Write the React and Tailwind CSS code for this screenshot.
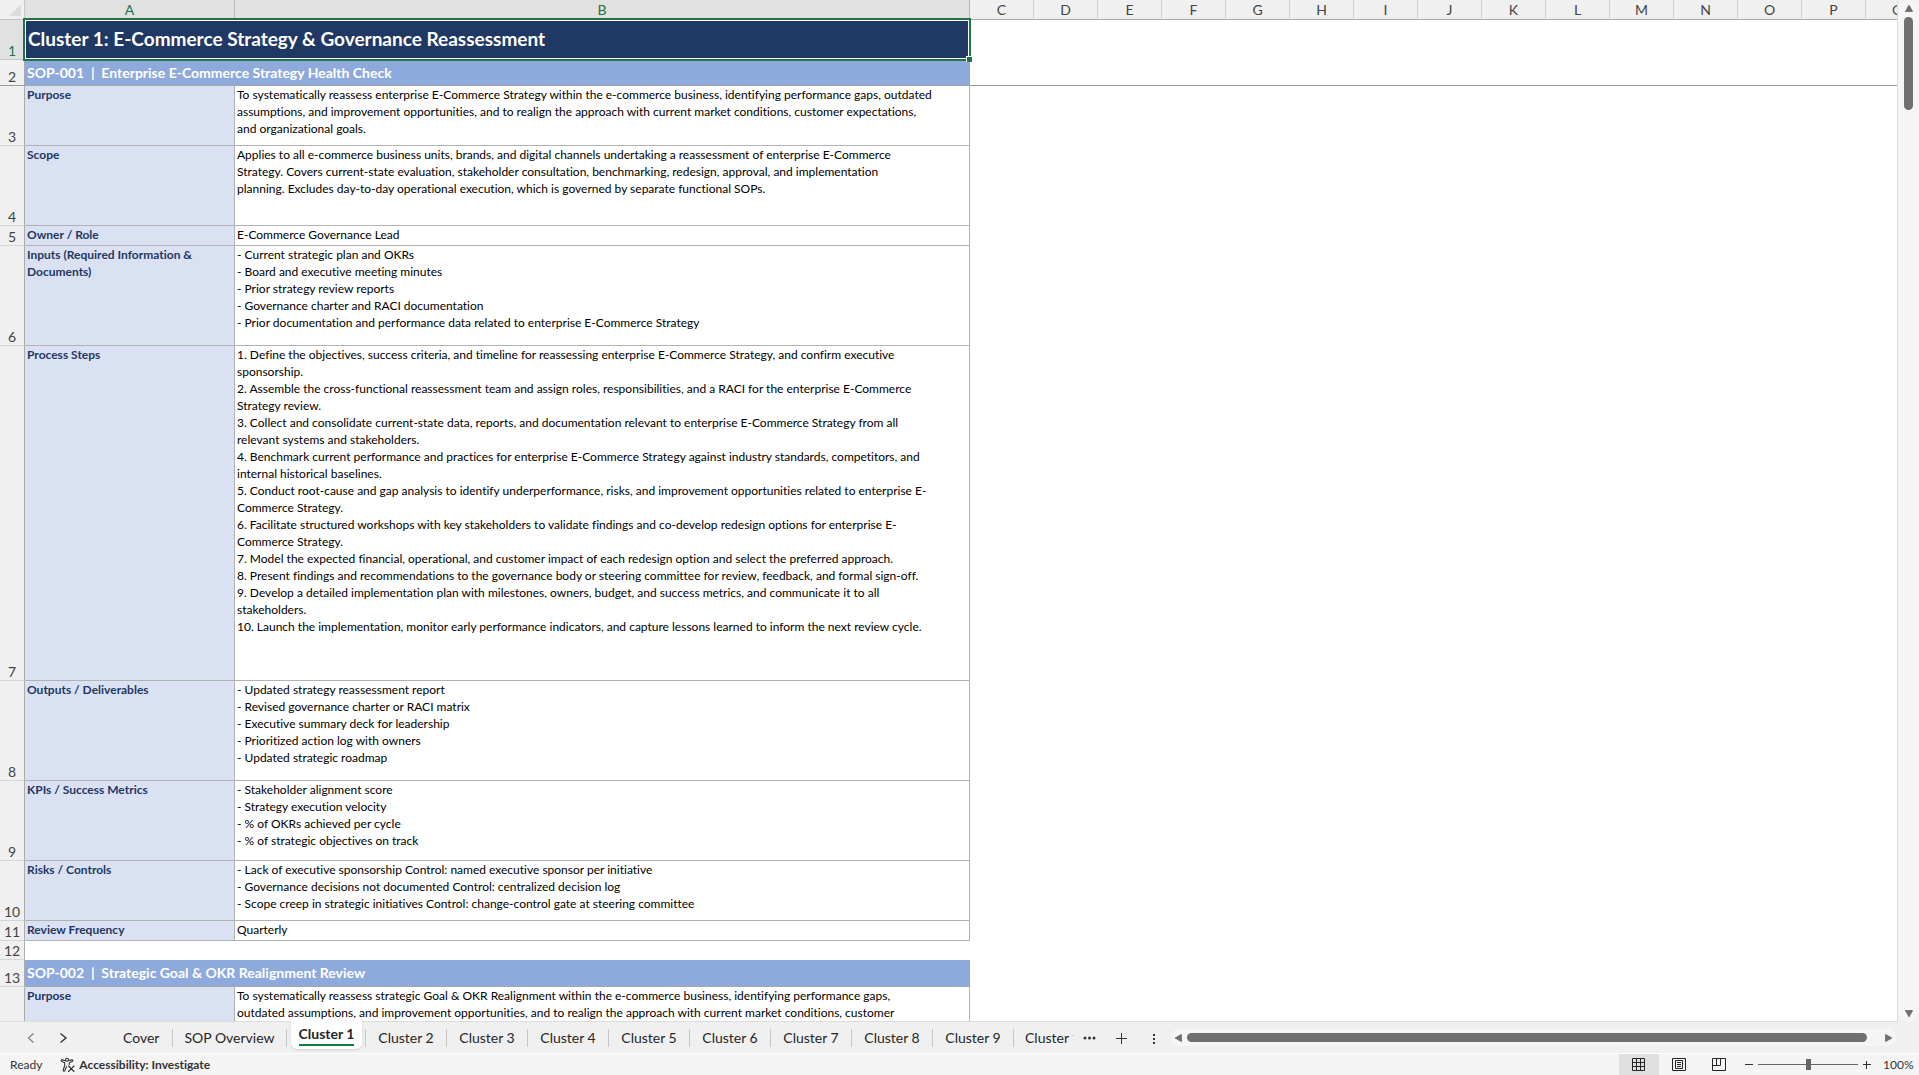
import React, { useState } from "react";
import clsx from "clsx";

const COLUMNS = "ABCDEFGHIJKLMNOPQ".split("");

const ROWS = [
  { type: "title", height: "h-[40px]", text: "Cluster 1: E-Commerce Strategy & Governance Reassessment" },
  { type: "band", height: "h-[26px]", code: "SOP-001", text: "Enterprise E-Commerce Strategy Health Check", frozen: true },
  {
    height: "h-[60px]",
    label: ["Purpose"],
    lines: [
      "To systematically reassess enterprise E-Commerce Strategy within the e-commerce business, identifying performance gaps, outdated",
      "assumptions, and improvement opportunities, and to realign the approach with current market conditions, customer expectations,",
      "and organizational goals.",
    ],
  },
  {
    height: "h-[80px]",
    label: ["Scope"],
    lines: [
      "Applies to all e-commerce business units, brands, and digital channels undertaking a reassessment of enterprise E-Commerce",
      "Strategy. Covers current-state evaluation, stakeholder consultation, benchmarking, redesign, approval, and implementation",
      "planning. Excludes day-to-day operational execution, which is governed by separate functional SOPs.",
    ],
  },
  { height: "h-[20px]", label: ["Owner / Role"], lines: ["E-Commerce Governance Lead"] },
  {
    height: "h-[100px]",
    label: ["Inputs (Required Information &", "Documents)"],
    lines: [
      "- Current strategic plan and OKRs",
      "- Board and executive meeting minutes",
      "- Prior strategy review reports",
      "- Governance charter and RACI documentation",
      "- Prior documentation and performance data related to enterprise E-Commerce Strategy",
    ],
  },
  {
    height: "h-[335px]",
    label: ["Process Steps"],
    lines: [
      "1. Define the objectives, success criteria, and timeline for reassessing enterprise E-Commerce Strategy, and confirm executive",
      "sponsorship.",
      "2. Assemble the cross-functional reassessment team and assign roles, responsibilities, and a RACI for the enterprise E-Commerce",
      "Strategy review.",
      "3. Collect and consolidate current-state data, reports, and documentation relevant to enterprise E-Commerce Strategy from all",
      "relevant systems and stakeholders.",
      "4. Benchmark current performance and practices for enterprise E-Commerce Strategy against industry standards, competitors, and",
      "internal historical baselines.",
      "5. Conduct root-cause and gap analysis to identify underperformance, risks, and improvement opportunities related to enterprise E-",
      "Commerce Strategy.",
      "6. Facilitate structured workshops with key stakeholders to validate findings and co-develop redesign options for enterprise E-",
      "Commerce Strategy.",
      "7. Model the expected financial, operational, and customer impact of each redesign option and select the preferred approach.",
      "8. Present findings and recommendations to the governance body or steering committee for review, feedback, and formal sign-off.",
      "9. Develop a detailed implementation plan with milestones, owners, budget, and success metrics, and communicate it to all",
      "stakeholders.",
      "10. Launch the implementation, monitor early performance indicators, and capture lessons learned to inform the next review cycle.",
    ],
  },
  {
    height: "h-[100px]",
    label: ["Outputs / Deliverables"],
    lines: [
      "- Updated strategy reassessment report",
      "- Revised governance charter or RACI matrix",
      "- Executive summary deck for leadership",
      "- Prioritized action log with owners",
      "- Updated strategic roadmap",
    ],
  },
  {
    height: "h-[80px]",
    label: ["KPIs / Success Metrics"],
    lines: [
      "- Stakeholder alignment score",
      "- Strategy execution velocity",
      "- % of OKRs achieved per cycle",
      "- % of strategic objectives on track",
    ],
  },
  {
    height: "h-[60px]",
    label: ["Risks / Controls"],
    lines: [
      "- Lack of executive sponsorship Control: named executive sponsor per initiative",
      "- Governance decisions not documented Control: centralized decision log",
      "- Scope creep in strategic initiatives Control: change-control gate at steering committee",
    ],
  },
  { height: "h-[20px]", label: ["Review Frequency"], lines: ["Quarterly"] },
  { type: "empty", height: "h-[19px]" },
  { type: "band", height: "h-[27px]", code: "SOP-002", text: "Strategic Goal & OKR Realignment Review" },
  {
    height: "h-[60px]",
    label: ["Purpose"],
    lines: [
      "To systematically reassess strategic Goal & OKR Realignment within the e-commerce business, identifying performance gaps,",
      "outdated assumptions, and improvement opportunities, and to realign the approach with current market conditions, customer",
    ],
  },
];

const TABS = [
  "Cover",
  "SOP Overview",
  "Cluster 1",
  "Cluster 2",
  "Cluster 3",
  "Cluster 4",
  "Cluster 5",
  "Cluster 6",
  "Cluster 7",
  "Cluster 8",
  "Cluster 9",
];

const Lines = ({ lines }) =>
  lines.map((line, i) => (
    <div key={i} className="whitespace-nowrap">
      {line}
    </div>
  ));

const SheetRow = ({ row, number }) => {
  const selected = row.type === "title";

  return (
    <tr className={row.height}>
      <th
        scope="row"
        className={clsx(
          "border-r border-b p-0 text-center align-bottom text-sm leading-4 font-normal",
          selected
            ? "border-r-[#ababab] border-b-[#c6c6c6] bg-[#e1e1e1] text-[#217346]"
            : "border-r-[#ababab] bg-[#f0f0f0] text-[#444]",
          !selected && (row.frozen ? "border-b-[#9b9b9b]" : "border-b-[#d6d6d6]")
        )}
      >
        {number < 14 && number}
      </th>

      {row.type === "title" && (
        <td colSpan={2} className="relative bg-[#203864] px-[3px] pt-0 pb-0.5 align-middle text-[19px] leading-6 font-bold text-white">
          {row.text}
          {/* selection outline and fill handle */}
          <div className="pointer-events-none absolute -top-0.5 -right-px -bottom-px -left-0.5 border-2 border-[#217346]">
            <div className="h-full border border-white" />
          </div>
          <div className="absolute -right-0.5 -bottom-0.5 size-1.5 border-t border-l border-white bg-[#217346]" />
        </td>
      )}

      {row.type === "band" && (
        <td
          colSpan={2}
          className="border-b border-[#a6a6a6] bg-[#8ea9db] px-0.5 py-0 align-middle text-sm leading-5 font-bold whitespace-pre text-white"
        >
          {row.code + "  |  " + row.text}
        </td>
      )}

      {row.type === "empty" && <td colSpan={2} />}

      {!row.type && (
        <>
          <td className="border-r border-b border-[#b2b2b2] bg-[#d9e1f2] px-0.5 py-0 align-top font-bold text-[#1f3864]">
            <Lines lines={row.label} />
          </td>
          <td className="border-r border-b border-[#b2b2b2] px-0.5 py-0 align-top">
            <Lines lines={row.lines} />
          </td>
        </>
      )}

      <td colSpan={COLUMNS.length - 2} className={clsx(row.frozen && "border-b border-[#9b9b9b]")} />
    </tr>
  );
};

const Sheet = () => (
  <div className="min-w-0 flex-1 overflow-hidden border-r border-b border-[#dcdcdc] bg-white">
    <table className="w-full table-fixed border-separate border-spacing-0 text-left text-[12px] leading-[17px] text-black">
      <colgroup>
        <col className="w-[25px]" />
        <col className="w-[210px]" />
        <col className="w-[735px]" />
        {COLUMNS.slice(2).map((c) => (
          <col key={c} className="w-16" />
        ))}
      </colgroup>
      <thead>
        <tr className="h-5">
          <td className="border-r border-b border-r-[#c6c6c6] border-b-[#c6c6c6] bg-[#f0f0f0] p-0">
            <svg viewBox="0 0 24 19" className="block h-[19px] w-6">
              <path d="M21 4v12H9z" fill="#dcdcdc" />
            </svg>
          </td>
          {COLUMNS.map((c, i) => (
            <th
              key={c}
              scope="col"
              className={clsx(
                "border-r border-b border-b-[#ababab] p-0 text-center text-sm leading-[19px] font-normal",
                i < 2 ? "border-r-[#b8b8b8] bg-[#e1e1e1] text-[#217346]" : "border-r-[#d0d0d0] bg-[#f0f0f0] text-[#444]"
              )}
            >
              {c}
            </th>
          ))}
        </tr>
      </thead>
      <tbody>
        {ROWS.map((row, i) => (
          <SheetRow key={i} row={row} number={i + 1} />
        ))}
      </tbody>
    </table>
  </div>
);

const VerticalScrollbar = () => (
  <div className="flex w-[21px] flex-col items-center rounded-full bg-[#f5f5f5] pt-1 pb-1">
    <button aria-label="Scroll up">
      <svg viewBox="0 0 10 9" className="block h-[9px] w-2.5">
        <path d="M5 1.2 8.5 7.4h-7z" fill="#707070" stroke="#707070" strokeLinejoin="round" />
      </svg>
    </button>
    <div className="mt-1 h-[93px] w-[9px] rounded-full bg-[#707070]" />
    <button aria-label="Scroll down" className="mt-auto">
      <svg viewBox="0 0 10 9" className="block h-[9px] w-2.5">
        <path d="M5 7.8 8.5 1.6h-7z" fill="#707070" stroke="#707070" strokeLinejoin="round" />
      </svg>
    </button>
  </div>
);

const HorizontalScrollbar = () => (
  <div className="mr-[22px] flex h-[17px] flex-1 items-center rounded-full bg-[#f5f5f5] px-1">
    <button aria-label="Scroll left">
      <svg viewBox="0 0 9 10" className="block h-2.5 w-[9px]">
        <path d="M1.2 5 7.4 8.5v-7z" fill="#707070" stroke="#707070" strokeLinejoin="round" />
      </svg>
    </button>
    <div className="mr-[17px] ml-1 h-[9px] flex-1 rounded-full bg-[#707070]" />
    <button aria-label="Scroll right">
      <svg viewBox="0 0 9 10" className="block h-2.5 w-[9px]">
        <path d="M7.8 5 1.6 8.5v-7z" fill="#707070" stroke="#707070" strokeLinejoin="round" />
      </svg>
    </button>
  </div>
);

const TabBar = () => {
  const [active, setActive] = useState("Cluster 1");

  return (
    <div className="flex h-8 items-center border-b border-white bg-[#f0f0f0] text-sm text-[#262626]">
      <button aria-label="Previous sheet" className="ml-6">
        <svg viewBox="0 0 14 14" className="size-3.5" fill="none" stroke="#8a8a8a" strokeWidth="1.4">
          <path d="M9.5 2.5 4.5 7l5 4.5" />
        </svg>
      </button>
      <button aria-label="Next sheet" className="mr-[53px] ml-[18px]">
        <svg viewBox="0 0 14 14" className="size-3.5" fill="none" stroke="#333" strokeWidth="1.4">
          <path d="M4.5 2.5 10 7l-5.500 4.500" />
        </svg>
      </button>

      {TABS.map((tab, i) =>
        tab === active ? (
          <div key={tab} className="flex h-full w-[79px] items-center">
            <button className="-mt-[5px] ml-1 flex h-7 w-[71px] justify-center rounded-b-md bg-white shadow-sm">
              <span className="mt-1 h-[21px] border-b-2 border-[#107c41] leading-[18px] font-bold">{tab}</span>
            </button>
            <span className="ml-auto h-[18px] border-r border-[#c6c6c6]" />
          </div>
        ) : (
          <button
            key={tab}
            onClick={() => setActive(tab)}
            className={clsx(
              "h-[18px] border-r border-[#c6c6c6] leading-4 whitespace-nowrap",
              i === 0 && "w-[50px] text-left",
              i === 1 && "w-[114px]",
              i > 1 && "w-[81px]"
            )}
          >
            {tab}
          </button>
        )
      )}
      <button className="ml-[11px] h-[18px] w-[49px] overflow-hidden text-left leading-4 whitespace-nowrap">Cluster 10</button>

      <button aria-label="More sheets" className="ml-2">
        <svg viewBox="0 0 14 14" className="size-3.5" fill="#333">
          <circle cx="3" cy="7" r="1.500" />
          <circle cx="7.500" cy="7" r="1.500" />
          <circle cx="12" cy="7" r="1.500" />
        </svg>
      </button>
      <button aria-label="New sheet" className="ml-[18px]">
        <svg viewBox="0 0 14 14" className="size-3.5" stroke="#333" strokeWidth="1">
          <path d="M7.500 2v11M2 7.500h11" />
        </svg>
      </button>
      <button aria-label="Resize tab bar" className="ml-6">
        <svg viewBox="0 0 4 14" className="h-3.5 w-1" fill="#333">
          <path d="M1 3h2v2H1zM1 7h2v2H1zM1 11h2v2H1z" />
        </svg>
      </button>
      <div className="ml-3.5 flex flex-1">
        <HorizontalScrollbar />
      </div>
    </div>
  );
};

const StatusBar = () => {
  const [zoom, setZoom] = useState(100);

  return (
    <div className="flex h-[21px] items-center bg-[#f4f4f4] text-[12px] text-[#333]">
      <span className="ml-2.5">Ready</span>
      <button className="ml-[18px] flex items-center gap-[3px] font-bold">
        <svg viewBox="0 0 16 16" className="size-4" fill="none" stroke="#333" strokeWidth="1.1" strokeLinecap="round" strokeLinejoin="round">
          <circle cx="7" cy="2.700" r="1.500" />
          <path d="M5.400 3.800 2.300 2.900c-1.200-.3-1.600 1.300-.5 1.700l2.900 1.100v2.800l-1.500 4.500c-.3 1.200 1.200 1.600 1.600.6l1.700-3.900" />
          <path d="m8.600 3.800 3.100-.9c1.200-.3 1.600 1.300.5 1.700L9.300 5.700v1.800" />
          <path d="m8.500 9 5.500 5.500M14 9l-5.500 5.500" />
        </svg>
        Accessibility: Investigate
      </button>

      <div className="ml-auto flex h-full items-center">
        <button aria-label="Normal view" className="flex h-full w-10 items-center justify-center bg-[#e0e0e0]">
          <svg viewBox="0 0 14 14" className="size-3.5" fill="none" stroke="#262626">
            <path d="M.5.5h12v12H.5zM4.500.5v12M8.500.5v12M.5 4.500h12M.5 8.500h12" />
          </svg>
        </button>
        <button aria-label="Page layout" className="flex h-full w-10 items-center justify-center">
          <svg viewBox="0 0 14 14" className="size-3.5" fill="none" stroke="#262626">
            <path d="M.5.5h13v12H.5zM3.500 2.500h7v8h-7zM5 4.500h4M5 6.500h4M5 8.500h4" />
          </svg>
        </button>
        <button aria-label="Page break preview" className="flex h-full w-10 items-center justify-center">
          <svg viewBox="0 0 14 14" className="size-3.5" fill="none" stroke="#262626">
            <path d="M.5.5h13v12H.5zM.5 7.500h8v-7M4.500.5v7" />
          </svg>
        </button>
        <button aria-label="Zoom out" className="ml-1.5">
          <svg viewBox="0 0 8 8" className="size-2" stroke="#333">
            <path d="M0 3.500h8" />
          </svg>
        </button>
        <input
          type="range"
          aria-label="Zoom"
          min="0"
          max="200"
          value={zoom}
          onChange={(e) => setZoom(Number(e.target.value))}
          className="mx-[5px] h-3 w-[100px] appearance-none bg-transparent [&::-webkit-slider-runnable-track]:h-px [&::-webkit-slider-runnable-track]:bg-[#666] [&::-webkit-slider-thumb]:-mt-[5px] [&::-webkit-slider-thumb]:h-[11px] [&::-webkit-slider-thumb]:w-[5px] [&::-webkit-slider-thumb]:appearance-none [&::-webkit-slider-thumb]:bg-[#666]"
        />
        <button aria-label="Zoom in">
          <svg viewBox="0 0 8 8" className="size-2" stroke="#333">
            <path d="M0 3.500h8M3.500 0v8" />
          </svg>
        </button>
        <button className="mr-2 ml-3 w-7 text-right whitespace-nowrap">{zoom}%</button>
      </div>
    </div>
  );
};

export default function App() {
  return (
    <div className="flex h-screen flex-col overflow-hidden bg-[#f0f0f0] font-[Lato,sans-serif] [font-variant-ligatures:none]">
      <div className="flex min-h-0 flex-1">
        <Sheet />
        <VerticalScrollbar />
      </div>
      <TabBar />
      <StatusBar />
    </div>
  );
}
